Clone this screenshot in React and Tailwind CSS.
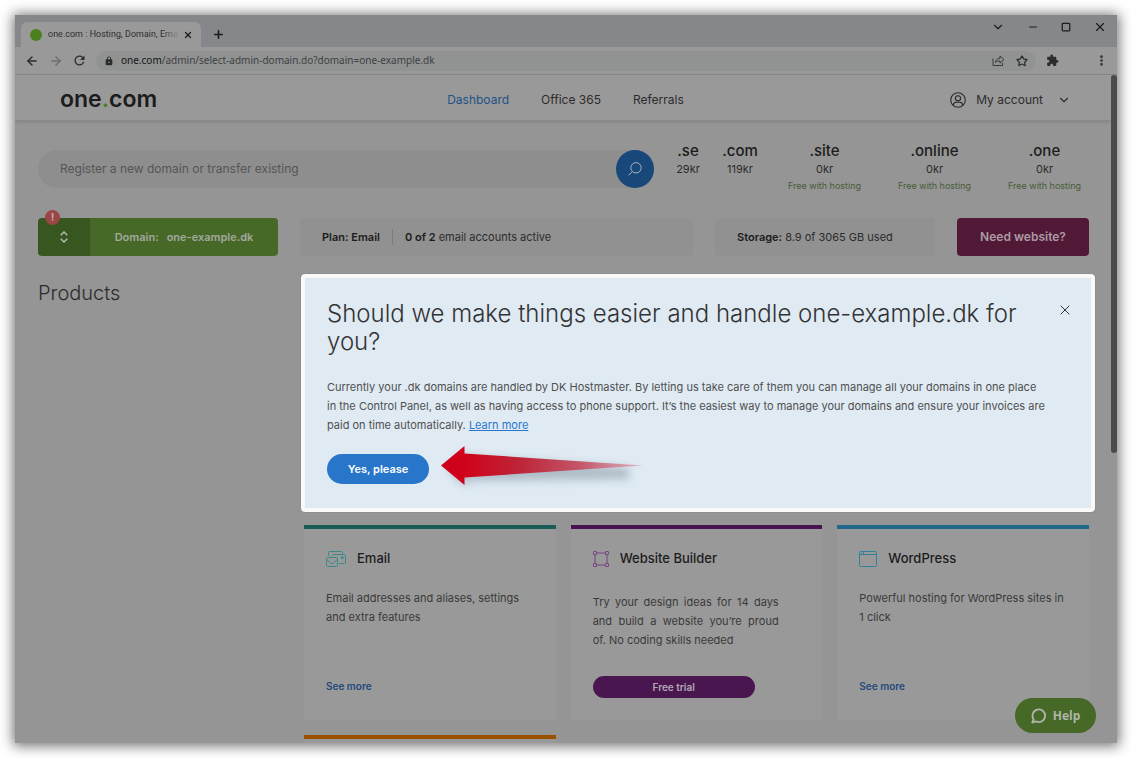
import {
  ArrowLeft,
  ArrowRight,
  ChevronDown,
  Minus,
  MoreVertical,
  Plus,
  Square,
  Star,
  X,
} from 'lucide-react';
import { MdExtension, MdLock, MdRefresh } from 'react-icons/md';

const prices = [
  { tld: '.se', price: '29kr', cell: 'w-6 ml-[22px]' },
  { tld: '.com', price: '119kr', cell: 'w-9 ml-[22px]' },
  { tld: '.site', price: '0kr', note: 'Free with hosting', cell: 'w-[73px] ml-[30px]' },
  { tld: '.online', price: '0kr', note: 'Free with hosting', cell: 'w-[73px] ml-[37px]' },
  { tld: '.one', price: '0kr', note: 'Free with hosting', cell: 'w-[73px] ml-[37px] mr-2' },
];

function MailIcon() {
  return (
    <svg width="20" height="16" viewBox="0 0 20 16" fill="none" stroke="#3b8a88" strokeWidth="1" aria-hidden="true">
      <path d="M2.500 5V1.500a1 1 0 0 1 1-1h12a1 1 0 0 1 1 1v2" />
      <path d="M6.500 5.200V4.500a1 1 0 0 1 1-1h11a1 1 0 0 1 1 1v7a1 1 0 0 1-1 1H13" />
      <rect x="0.500" y="6.500" width="11" height="9" rx="1" />
      <path d="M0.700 8.500 4.800 12a1.800 1.800 0 0 0 2.400 0l4.100-3.500" />
      <rect x="15.500" y="6" width="1.500" height="1.500" fill="#3b8a88" />
    </svg>
  );
}

function FrameIcon() {
  return (
    <svg width="16" height="16" viewBox="0 0 16 16" fill="none" stroke="#774380" strokeWidth="1" aria-hidden="true">
      <path d="M3.500 2h9M3.500 14h9M2 3.500v9M14 3.500v9" />
      <rect x="0.500" y="0.500" width="3" height="3" rx="0.500" />
      <rect x="12.500" y="0.500" width="3" height="3" rx="0.500" />
      <rect x="0.500" y="12.500" width="3" height="3" rx="0.500" />
      <rect x="12.500" y="12.500" width="3" height="3" rx="0.500" />
    </svg>
  );
}

function WindowIcon() {
  return (
    <svg width="18" height="16" viewBox="0 0 18 16" fill="none" stroke="#2f8299" strokeWidth="1" aria-hidden="true">
      <rect x="0.500" y="0.500" width="17" height="15" rx="1.200" />
      <path d="M0.500 3.500h17M4.500 0.500v3M2.500 1.500v1" />
    </svg>
  );
}

function ShareIcon() {
  return (
    <svg width="13" height="13" viewBox="0 0 13 13" fill="none" stroke="#37393c" strokeWidth="1" aria-hidden="true">
      <path d="M1 4.500v7h9.500V9" />
      <path d="M3.500 8.500C3.700 5.800 5.300 4.300 8 4.200V2l4 3.600-4 3.500V6.900C6 6.800 4.700 7.300 3.500 8.500Z" strokeLinejoin="round" />
    </svg>
  );
}

function AccountIcon() {
  return (
    <svg width="16" height="16" viewBox="0 0 16 16" fill="none" stroke="#2a2a2a" strokeWidth="1.100" aria-hidden="true">
      <circle cx="8" cy="8" r="7.300" />
      <circle cx="8" cy="6.300" r="2.600" />
      <path d="M3.200 13.300c.3-2 1.400-3 3-3h3.600c1.600 0 2.700 1 3 3" />
    </svg>
  );
}

function Arrow() {
  return (
    <svg
      className="pointer-events-none absolute -top-3 left-full ml-2"
      width="214"
      height="60"
      viewBox="0 0 214 60"
      aria-hidden="true"
    >
      <defs>
        <linearGradient id="arrow-red" gradientUnits="userSpaceOnUse" x1="28" y1="0" x2="206" y2="0">
          <stop offset="0" stopColor="#d0021b" />
          <stop offset="0.3" stopColor="#bd2437" />
          <stop offset="0.65" stopColor="#c4576a" />
          <stop offset="1" stopColor="#dc9aa6" stopOpacity="0.7" />
        </linearGradient>
        <filter id="arrow-blur" x="-10%" y="-60%" width="120%" height="220%">
          <feGaussianBlur stdDeviation="4" />
        </filter>
      </defs>
      <path d="M10 26 28 10 30 14 192 26v11L30 39 28 45Z" fill="#3c5260" opacity="0.3" filter="url(#arrow-blur)" />
      <path d="M4 23.500 27.500 4v7.500L206 23.500 27.500 35.500V43Z" fill="url(#arrow-red)" />
    </svg>
  );
}

function Card({ bar, icon, title, children }) {
  return (
    <article className={`flex h-[195px] flex-col border-t-4 bg-[#999999] px-[22px] pb-[22px] pt-[18px] text-[#3a3a3a] ${bar}`}>
      <h2 className="flex h-6 items-center gap-[11px] text-[13px] font-medium text-[#1c1c1c]">
        {icon}
        {title}
      </h2>
      {children}
    </article>
  );
}

function BrowserChrome() {
  return (
    <>
      <div className="flex h-8 shrink-0 items-end justify-between bg-[#85878a] pl-[6px]">
        <div className="flex items-end gap-[11px]">
          <div className="flex h-[25px] w-[180px] items-center rounded-t-md bg-[#999999] pl-[9px] pr-2">
            <span className="size-3 shrink-0 rounded-full bg-[#4a8020]" />
            <span className="ml-[6px] w-[132px] whitespace-nowrap font-[Roboto,sans-serif] text-[9px] text-[#2b2c2e] [mask-image:linear-gradient(to_right,black_88%,transparent)]">
              one.com : Hosting, Domain, Ema
            </span>
            <button aria-label="Close tab" className="ml-1 text-[#1c1c1c]">
              <X size={10} strokeWidth={3} />
            </button>
          </div>
          <button aria-label="New tab" className="mb-[6px] text-[#1c1c1c]">
            <Plus size={13} strokeWidth={3} />
          </button>
        </div>
        <div className="flex items-center gap-[22px] self-start pr-[10px] pt-[5px] text-[#1c1c1c]">
          <button aria-label="Search tabs"><ChevronDown size={14} strokeWidth={2} /></button>
          <button aria-label="Minimize"><Minus size={12} strokeWidth={2} /></button>
          <button aria-label="Maximize"><Square size={10} strokeWidth={3} /></button>
          <button aria-label="Close"><X size={14} strokeWidth={2} /></button>
        </div>
      </div>
      <div className="flex h-7 shrink-0 items-center border-b border-[#858585] bg-[#999999] pl-[10px] pr-[9px] text-[#2b2c2e]">
        <button aria-label="Back"><ArrowLeft size={14} strokeWidth={2.5} /></button>
        <button aria-label="Forward" className="ml-[10px] text-[#6c6d6f]"><ArrowRight size={14} strokeWidth={2.5} /></button>
        <button aria-label="Reload" className="ml-[9px]"><MdRefresh size={15} /></button>
        <div className="ml-[9px] flex h-5 flex-1 items-center rounded-full bg-[#909392] pl-2 pr-2">
          <MdLock size={10} className="shrink-0" />
          <div className="ml-[7px] flex-1 font-['Noto_Sans',sans-serif] text-[10px] text-[#3f4144]">
            <span className="text-[#151515]">one.com</span>/admin/select-admin-domain.do?domain=one-example.dk
          </div>
          <button aria-label="Share"><ShareIcon /></button>
          <button aria-label="Bookmark" className="ml-[11px]"><Star size={12} strokeWidth={2.5} /></button>
        </div>
        <button aria-label="Extensions" className="ml-[10px]"><MdExtension size={13} /></button>
        <button aria-label="Menu" className="ml-[36px]"><MoreVertical size={13} strokeWidth={3} /></button>
      </div>
    </>
  );
}

export default function App() {
  return (
    <div className="h-screen bg-white p-[15px] font-[Inter,sans-serif] text-[#2c2c2c]">
      <div className="relative flex h-full flex-col overflow-hidden bg-[#959595] shadow-[0_1px_12px_2px_rgba(0,0,0,0.55)]">
        <BrowserChrome />
        <div className="flex min-h-0 flex-1">
          <div className="min-w-0 flex-1 overflow-hidden">
            <header className="grid h-[46px] grid-cols-[1fr_auto_1fr] items-center border-b border-[#8a8a8a] bg-[#999999] pl-[45px] pr-[40px] pt-1 shadow-sm">
              <a href="#home" className="text-[23px] font-semibold leading-none text-[#1c1c1c]">
                one<span className="text-[#4a8020]">.</span>com
              </a>
              <nav className="flex gap-8 text-[12px]">
                <a href="#dashboard" className="text-[#1f5286]">Dashboard</a>
                <a href="#office">Office 365</a>
                <a href="#referrals">Referrals</a>
              </nav>
              <button className="flex items-center gap-[10px] justify-self-end text-[12px]">
                <AccountIcon />
                My account
                <ChevronDown size={14} strokeWidth={2} className="ml-1" />
              </button>
            </header>

            <main className="pl-[23px] pr-[22px] pt-5">
              <div className="flex h-[54px] items-center">
                <form className="mt-px flex h-[38px] flex-1 items-center rounded-full bg-[#8e8e8e]">
                  <input
                    aria-label="Register a new domain or transfer existing"
                    placeholder="Register a new domain or transfer existing"
                    className="min-w-0 flex-1 bg-transparent pl-[22px] text-xs outline-none placeholder:text-[#555555]"
                  />
                  <button type="button" aria-label="Search" className="flex size-[38px] items-center justify-center rounded-full bg-[#18477a] text-[#a3b3c4]">
                    <svg width="14" height="14" viewBox="0 0 14 14" fill="none" stroke="currentColor" strokeWidth="1" aria-hidden="true">
                      <circle cx="8" cy="5.800" r="5.200" />
                      <path d="M4.300 9.600.500 13.400" />
                    </svg>
                  </button>
                </form>
                {prices.map((p) => (
                  <div key={p.tld} className={`flex h-[54px] shrink-0 flex-col items-center whitespace-nowrap ${p.cell}`}>
                    <span className="text-[15px] font-medium leading-[19px] text-[#1c1c1c]">{p.tld}</span>
                    <span className="text-[11px] leading-[18px]">{p.price}</span>
                    {p.note && <span className="text-[9px] leading-4 text-[#475c36]">{p.note}</span>}
                  </div>
                ))}
              </div>

              <div className="mt-[23px] flex h-[38px] gap-[22px] text-[11px]">
                <div className="relative flex w-60 shrink-0">
                  <button aria-label="Switch domain" className="flex w-[52px] items-center justify-center rounded-l bg-[#385620] text-[#b3b8ae]">
                    <svg width="8" height="12" viewBox="0 0 8 12" fill="none" stroke="currentColor" strokeWidth="1.500" aria-hidden="true">
                      <path d="M.7 4.200 4 1l3.300 3.200M.7 7.800 4 11l3.300-3.200" />
                    </svg>
                  </button>
                  <button className="flex flex-1 items-center justify-center gap-2 rounded-r bg-[#466928] font-semibold text-[#a3a89e]">
                    <span>Domain:</span>
                    <span>one-example.dk</span>
                  </button>
                  <span className="absolute -top-2 left-[7px] flex size-[15px] items-center justify-center rounded-full bg-[#9c4545] text-[11px] font-bold text-[#b9aaaa]">
                    !
                  </span>
                </div>
                <div className="flex flex-1 items-center rounded bg-[#919191] pl-[22px]">
                  <span className="font-semibold text-[#1c1c1c]">Plan: Email</span>
                  <span className="ml-3 h-4 border-l border-[#7c7c7c] pl-3 leading-4">
                    <b className="font-semibold text-[#1c1c1c]">0 of 2</b> email accounts active
                  </span>
                </div>
                <div className="flex w-[220px] items-center whitespace-nowrap rounded bg-[#919191] pl-[22px]">
                  <span><b className="font-semibold text-[#1c1c1c]">Storage:</b> 8.9 of 3065 GB used</span>
                </div>
                <button className="w-[132px] whitespace-nowrap rounded bg-[#511936] text-xs font-semibold text-[#ab9ba4]">Need website?</button>
              </div>

              <div className="mt-[18px] flex">
                <h1 className="w-[266px] shrink-0 pt-[5px] text-xl font-light leading-7">Products</h1>
                <div className="min-w-0 flex-1">
                  <section
                    role="dialog"
                    aria-labelledby="handle-title"
                    className="-ml-[3px] -mr-[6px] rounded border-4 border-[#f8f9f8] bg-[#dfeaf3] pb-6 pl-[22px] pr-[18px] pt-[22px] shadow-[0_0_1px_rgba(0,0,0,0.4)]"
                  >
                    <div className="flex items-start justify-between">
                      <h2 id="handle-title" className="max-w-[716px] text-[24px] font-light leading-7 text-[#333333]">
                        Should we make things easier and handle one-example.dk for you?
                      </h2>
                      <button aria-label="Dismiss" className="mt-[2px] text-[#333333]">
                        <X size={16} strokeWidth={1.5} />
                      </button>
                    </div>
                    <p className="mt-[22px] max-w-[728px] text-[11px] leading-[19px] text-[#505050]">
                      Currently your .dk domains are handled by DK Hostmaster. By letting us take care of them you can manage all your domains in one place
                      in{'\u00a0'}the Control Panel, as well as having access to phone support. It’s the easiest way to manage your domains and ensure your invoices are
                      paid on time automatically.{' '}
                      <a href="#learn" className="text-[#2876cc] underline">Learn more</a>
                    </p>
                    <div className="relative mt-[19px] w-[102px]">
                      <button className="h-[30px] w-full rounded-full bg-[#2876c9] text-[11px] font-semibold text-white">Yes, please</button>
                      <Arrow />
                    </div>
                  </section>

                  <div className="mt-[13px] grid grid-cols-3 gap-[15px]">
                    <Card bar="border-[#1b5b55]" icon={<MailIcon />} title="Email">
                      <p className="mt-[18px] text-[11px] leading-[19px]">Email addresses and aliases, settings and extra features</p>
                      <a href="#email" className="mt-auto text-[10px] font-semibold leading-6 text-[#1f4a7c]">See more</a>
                    </Card>
                    <Card bar="border-[#471350]" icon={<FrameIcon />} title="Website Builder">
                      <p className="mt-[22px] w-[186px] text-justify text-[11px] leading-[19px]">
                        Try your design ideas for 14 days and build a website you’re proud of.{'\u00a0'}No coding skills needed
                      </p>
                      <button className="mt-auto h-[22px] w-[162px] rounded-full bg-[#491650] text-[10px] font-semibold text-[#b3a6b5]">Free trial</button>
                    </Card>
                    <Card bar="border-[#21698c]" icon={<WindowIcon />} title="WordPress">
                      <p className="mt-[18px] text-[11px] leading-[19px]">Powerful hosting for WordPress sites in 1 click</p>
                      <a href="#wordpress" className="mt-auto text-[10px] font-semibold leading-6 text-[#1f4a7c]">See more</a>
                    </Card>
                    <Card bar="border-[#9b5200]" />
                  </div>
                </div>
              </div>
            </main>
          </div>
          <div className="w-[6px] shrink-0 bg-[#959595]">
            <div className="h-[378px] rounded-full bg-[#4b4b4b]" />
          </div>
        </div>

        <button className="absolute bottom-[10px] right-[21px] flex h-[35px] w-[81px] items-center justify-center gap-[6px] rounded-full bg-[#466928] font-['Open_Sans',sans-serif] text-xs font-bold text-[#b0b5ab]">
          <svg width="16" height="16" viewBox="0 0 16 16" fill="none" stroke="currentColor" strokeWidth="1.800" aria-hidden="true">
            <path d="M2.600 11.300A6.300 6.300 0 1 1 5 13.400L1.200 14.600Z" strokeLinejoin="round" />
          </svg>
          Help
        </button>
      </div>
    </div>
  );
}
